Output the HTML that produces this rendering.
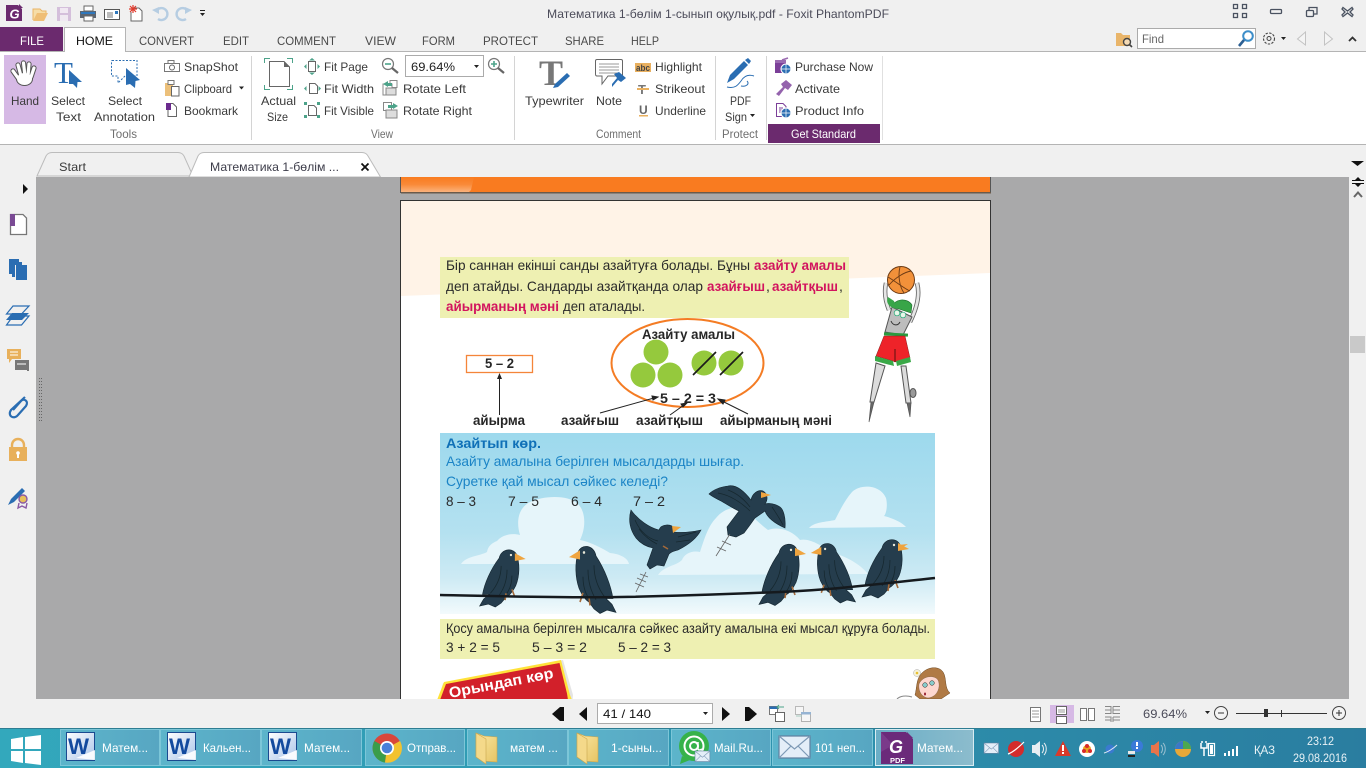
<!DOCTYPE html>
<html><head><meta charset="utf-8"><title>Foxit PhantomPDF</title>
<style>
html,body{margin:0;padding:0;width:1366px;height:768px;overflow:hidden;background:#f0f0f0}
svg{display:block}
text{font-family:"Liberation Sans","DejaVu Sans",sans-serif;font-size:12px;fill:#3a3a3a}
.g{fill:#6f6f6f}
.w{fill:#fff}
.b{font-weight:bold;font-size:14px;fill:#262626}
.p{font-size:14px;fill:#2a2a2a}
.m{font-weight:bold;font-size:14px;fill:#d2145e}
.u{font-size:14px;fill:#1b84c6}
</style></head><body>
<svg width="1366" height="768" viewBox="0 0 1366 768" xmlns="http://www.w3.org/2000/svg">
<defs>
<linearGradient id="sky" x1="0" y1="0" x2="0" y2="1"><stop offset="0" stop-color="#9dd9ed"/><stop offset=".55" stop-color="#b4e1f0"/><stop offset=".8" stop-color="#cdeaf4"/><stop offset="1" stop-color="#f2fafc"/></linearGradient>
<linearGradient id="bar" x1="0" y1="0" x2="1" y2="0"><stop offset="0" stop-color="#33a8bc"/><stop offset=".45" stop-color="#2f98b2"/><stop offset="1" stop-color="#2a7da0"/></linearGradient>
<linearGradient id="btn" x1="0" y1="0" x2="1" y2="0"><stop offset="0" stop-color="#5cb5cb"/><stop offset="1" stop-color="#57a6c2"/></linearGradient>
<linearGradient id="act" x1="0" y1="0" x2="1" y2="0"><stop offset="0" stop-color="#6aaec6"/><stop offset="1" stop-color="#8cbccd"/></linearGradient>
<linearGradient id="og" x1="0" y1="0" x2="0" y2="1"><stop offset="0" stop-color="#f97c20"/><stop offset=".5" stop-color="#f98a38"/><stop offset="1" stop-color="#fbb27c"/></linearGradient>
<linearGradient id="fold" x1="0" y1="0" x2="1" y2="1"><stop offset="0" stop-color="#fbe9a6"/><stop offset="1" stop-color="#e6c463"/></linearGradient>
<linearGradient id="wd" x1="0" y1="0" x2="1" y2="1"><stop offset="0" stop-color="#ffffff"/><stop offset="1" stop-color="#a9c4e8"/></linearGradient>
<g id="bird">
<path fill="#253d4d" stroke="#14252f" stroke-width=".6" d="M8,-3C11,6 11,18 7,28C4,34 1,38-3,40L-8,46L-14,50L-21,47L-30,49L-26,42L-20,37L-27,37C-25,26-19,12-10,0C-8,-10 5,-11 8,-3Z"/>
<path fill="none" stroke="#16282f" stroke-width=".8" d="M-8,8C-8,18-12,28-19,36M-2,12C-2,22-5,31-10,38M3,18C3,26 1,32-3,37"/>
<path fill="#efa43f" d="M6,-5L17,1L6,3Z"/><circle cx="2" cy="-3" r="1.200" fill="#e8e8d8"/>
<path fill="none" stroke="#a56a3a" stroke-width="1.600" d="M-3,36L-4,43M3,32L6,40"/>
</g>
<g id="fly">
<path fill="#253d4d" stroke="#14252f" stroke-width=".6" d="M9,-3C5,-9-5,-8-7,-2C-16,-4-28,-12-35,-22C-38,-12-36,-2-30,6C-25,12-18,15-13,16L-19,33L-16,37L-9,33L-2,34L3,22C5,20 8,19 12,18C20,14 30,8 35,-2C26,0 16,1 8,0Z"/>
<path fill="#efa43f" d="M6,-6L15,-5L7,1Z"/>
<path fill="none" stroke="#16282f" stroke-width=".7" d="M-31,-12C-26,0-17,7-8,9M-27,-3C-21,5-15,9-9,12M12,5L30,0M10,10L24,8"/>
<path fill="none" stroke="#a56a3a" stroke-width="1.500" d="M-3,14L2,17"/>
</g>
<g id="fly2">
<path fill="#253d4d" stroke="#14252f" stroke-width=".6" d="M-7,1C-14,-8-22,-15-30,-13C-38,-12-45,-9-49,-5C-45,-2-41,0-37,2C-30,6-24,10-19,12L-31,28L-30,36L-22,38L-14,34L-8,26L-3,19L7,12C9,18 16,24 27,29C28,18 25,10 22,8C16,4 10,4 7,5C10,1 10,-5 5,-8C0,-10-6,-5-7,1Z"/>
<path fill="#efa43f" d="M3,-7L13,-4L3,-1Z"/>
<path fill="none" stroke="#16282f" stroke-width=".7" d="M-40,-6C-28,-4-16,4-8,12M-30,-9C-22,-6-14,0-8,8M14,8C18,14 22,20 25,26"/>
</g>
<g id="env"><rect x="0" y="0" width="31" height="22" fill="#e4eef8" stroke="#5f7f9f" stroke-width="1.200"/><path d="M0,0L15.500,13L31,0M0,22L12,10M31,22L19,10" fill="none" stroke="#7d99b5" stroke-width="1.200"/></g>
</defs>

<rect width="1366" height="768" fill="#f0f0f0"/>

<!-- quick access -->
<path d="M6,5H18L22,9V21H6Z" fill="#6b2a6e"/><path d="M19,4L23,8H19Z" fill="#6b2a6e"/><text x="9.500" y="18.500" style="font:bold italic 13px 'Liberation Sans',sans-serif;fill:#fff">G</text>
<path d="M33,20V9H40L42,11H46V14" fill="#f6dda8" stroke="#eab566"/><path d="M33,21L37,13H48L44,21Z" fill="#efbe76"/>
<path d="M57,7H71V21H57Z" fill="#d4bfdb"/><rect x="60" y="8" width="8" height="5" fill="#f0e8f2"/><rect x="60" y="15" width="8" height="6" fill="#efe9f1"/>
<rect x="84" y="6" width="9" height="5" fill="#fff" stroke="#666"/><rect x="80" y="11" width="16" height="7" fill="#5c6672"/><rect x="81" y="12" width="14" height="2" fill="#2f78bd"/><rect x="84" y="16" width="9" height="5" fill="#fff" stroke="#666"/>
<rect x="104.500" y="9.500" width="15" height="10" fill="#fff" stroke="#555"/><path d="M107,13H113M107,15H113M107,17H113" stroke="#777"/><rect x="115" y="11" width="3" height="3" fill="#2f78bd"/>
<path d="M133,8H139L142,11V21H131V12" fill="#fff" stroke="#666"/><path d="M133,5V13M129,9H137M130,6L136,12M136,6L130,12" stroke="#e03b2e" stroke-width="1.200"/>
<path d="M157,10A6,6 0 1 1 158,19" fill="none" stroke="#b6cde2" stroke-width="2.400"/><path d="M152,10L159,7L159,14Z" fill="#b6cde2"/>
<path d="M187,10A6,6 0 1 0 186,19" fill="none" stroke="#b6cde2" stroke-width="2.400"/><path d="M192,10L185,7L185,14Z" fill="#b6cde2"/>
<rect x="200" y="10" width="5" height="1" fill="#222"/><path d="M200,13H205L202.500,16Z" fill="#222"/>

<text x="547" y="18" textLength="342" lengthAdjust="spacingAndGlyphs" style="fill:#4c4c5a">Математика 1-бөлім 1-сынып оқулық.pdf - Foxit PhantomPDF</text>

<!-- window controls -->
<g fill="none" stroke="#4a5260" stroke-width="1.300">
<path d="M1233.500,4.500h4v4h-4zM1242.500,4.500h4v4h-4zM1233.500,13.500h4v4h-4zM1242.500,13.500h4v4h-4z"/>
<rect x="1270.500" y="9.500" width="11" height="4" rx="1"/>
<rect x="1306.500" y="10.500" width="7" height="6" rx="1"/><path d="M1309,10V7.500h8V14h-3"/>
<path d="M1343,7.500L1347.500,11L1352,7.500L1353,9L1350,12L1353,15L1352,16.500L1347.500,13L1343,16.500L1342,15L1345,12L1342,9Z"/>
</g>

<!-- tabs -->
<rect x="0" y="27" width="63" height="24.500" fill="#6b2a6e"/>
<text x="20" y="45" textLength="24" lengthAdjust="spacingAndGlyphs" class="w">FILE</text>
<rect x="0" y="51" width="1366" height="1" fill="#b4b4b4"/>
<path d="M64.500,52V27.500H125.500V52" fill="#fff" stroke="#b4b4b4"/><rect x="65" y="51" width="60" height="2" fill="#fff"/>
<text x="76" y="45" textLength="37" lengthAdjust="spacingAndGlyphs" style="fill:#111">HOME</text>
<text x="139" y="45" textLength="55" lengthAdjust="spacingAndGlyphs" style="fill:#4a4a4a">CONVERT</text>
<text x="223" y="45" textLength="26" lengthAdjust="spacingAndGlyphs" style="fill:#4a4a4a">EDIT</text>
<text x="277" y="45" textLength="59" lengthAdjust="spacingAndGlyphs" style="fill:#4a4a4a">COMMENT</text>
<text x="365" y="45" textLength="31" lengthAdjust="spacingAndGlyphs" style="fill:#4a4a4a">VIEW</text>
<text x="422" y="45" textLength="33" lengthAdjust="spacingAndGlyphs" style="fill:#4a4a4a">FORM</text>
<text x="483" y="45" textLength="55" lengthAdjust="spacingAndGlyphs" style="fill:#4a4a4a">PROTECT</text>
<text x="565" y="45" textLength="39" lengthAdjust="spacingAndGlyphs" style="fill:#4a4a4a">SHARE</text>
<text x="631" y="45" textLength="28" lengthAdjust="spacingAndGlyphs" style="fill:#4a4a4a">HELP</text>

<!-- find area -->
<path d="M1116,46V33H1121L1123,35H1130V46Z" fill="#e9b56a"/><circle cx="1127" cy="42" r="3.500" fill="#fff" fill-opacity=".5" stroke="#444" stroke-width="1.400"/><path d="M1129.500,44.500L1132,47" stroke="#444" stroke-width="1.600"/>
<rect x="1137.500" y="28.500" width="118" height="20" fill="#fff" stroke="#ababab"/>
<text x="1142" y="43" textLength="22" lengthAdjust="spacingAndGlyphs" style="fill:#666">Find</text>
<circle cx="1248" cy="36" r="4.800" fill="#fff" stroke="#3d8ec9" stroke-width="2"/><path d="M1244,40L1239,46" stroke="#2c5f92" stroke-width="2.600"/>
<circle cx="1269" cy="38.500" r="2" fill="none" stroke="#444"/><circle cx="1269" cy="38.500" r="5.500" fill="none" stroke="#444" stroke-width="1.100" stroke-dasharray="2.400 1.300"/>
<path d="M1281,37H1286L1283.500,40Z" fill="#222"/>
<path d="M1305.500,32L1297.500,39L1305.500,45Z" fill="#f4f4f4" stroke="#c3c3c3"/>
<path d="M1324.500,32L1332.500,39L1324.500,45Z" fill="#f4f4f4" stroke="#c3c3c3"/>
<path d="M1349,41L1352.500,37.500L1356,41" fill="none" stroke="#333" stroke-width="1.800"/>

<!-- ribbon -->
<rect x="0" y="52" width="1366" height="92" fill="#fff"/>
<rect x="0" y="144" width="1366" height="1" fill="#b4b4b4"/>
<rect x="882" y="56" width="1" height="84" fill="#e0e0e0"/>
<rect x="251" y="56" width="1" height="84" fill="#d4d4d4"/><rect x="514" y="56" width="1" height="84" fill="#d4d4d4"/><rect x="715" y="56" width="1" height="84" fill="#d4d4d4"/><rect x="766" y="56" width="1" height="84" fill="#d4d4d4"/>

<rect x="4" y="55" width="42" height="69" fill="#d6b9e5"/>
<g stroke-linecap="round" fill="none">
<g stroke="#555" stroke-width="5.200"><path d="M13,71L18,78"/><path d="M18,65L21,76"/><path d="M23.500,63L25,76"/><path d="M29,64L28,76"/><path d="M34,68L31,77"/></g>
<ellipse cx="24.500" cy="79" rx="8.500" ry="7" fill="#555" stroke="none"/>
<g stroke="#fff" stroke-width="3.200"><path d="M13,71L18,78"/><path d="M18,65L21,76"/><path d="M23.500,63L25,76"/><path d="M29,64L28,76"/><path d="M34,68L31,77"/></g>
<ellipse cx="24.500" cy="79" rx="7.500" ry="6" fill="#fff" stroke="none"/>
</g>
<text x="11" y="105" textLength="28" lengthAdjust="spacingAndGlyphs">Hand</text>

<text x="54" y="83" style="font-family:'Liberation Serif',serif;font-size:31px;fill:#2a6db2">T</text>
<path d="M69,70L82,82L77.500,82L77,88L73,84L69,84Z" fill="#2a6db2"/>
<text x="51" y="105" textLength="34" lengthAdjust="spacingAndGlyphs">Select</text><text x="56" y="121" textLength="25" lengthAdjust="spacingAndGlyphs">Text</text>

<path d="M112,60.500H137V76H125L118,83V76H111.500V61Z" fill="#fff" stroke="#2a6db2" stroke-dasharray="2 1.500"/>
<path d="M126,68L140,80L135.500,81L135,88L130,84L126,85Z" fill="#2a6db2"/>
<text x="108" y="105" textLength="34" lengthAdjust="spacingAndGlyphs">Select</text><text x="94" y="121" textLength="61" lengthAdjust="spacingAndGlyphs">Annotation</text>

<rect x="164.500" y="63.500" width="15" height="8" fill="#fff" stroke="#777"/><rect x="168" y="60.500" width="6" height="3" fill="#fff" stroke="#777"/><circle cx="172" cy="67.500" r="2.500" fill="#fff" stroke="#666"/>
<text x="184" y="71" textLength="54" lengthAdjust="spacingAndGlyphs">SnapShot</text>
<rect x="165" y="83" width="8" height="13" fill="#ecc07a"/><rect x="168" y="80.500" width="6" height="4" fill="#fff" stroke="#777"/><path d="M171.500,86.500H179V96H171.500Z" fill="#fff" stroke="#666"/>
<text x="184" y="93" textLength="48" lengthAdjust="spacingAndGlyphs">Clipboard</text><path d="M239,86.500H244L241.500,89.500Z" fill="#222"/>
<path d="M168,103.500H173L176.500,107V116.500H168Z" fill="#fff" stroke="#666"/><rect x="166" y="103" width="5" height="7" fill="#6b2a8e"/>
<text x="184" y="115" textLength="54" lengthAdjust="spacingAndGlyphs">Bookmark</text>
<text x="110" y="138" textLength="27" lengthAdjust="spacingAndGlyphs" class="g">Tools</text>

<!-- view -->
<path d="M269.500,61.500H284L289.500,67V86.500H269.500Z" fill="#fff" stroke="#666"/><path d="M284,61V67H290Z" fill="#666"/>
<path d="M264.500,63V58.500H270M287,58.500H292.500V63M264.500,85V89.500H270M287,89.500H292.500V85" fill="none" stroke="#4da38a"/>
<text x="261" y="105" textLength="35" lengthAdjust="spacingAndGlyphs">Actual</text><text x="267" y="121" textLength="21" lengthAdjust="spacingAndGlyphs">Size</text>

<rect x="308.500" y="61.500" width="7" height="10" fill="#fff" stroke="#666"/><path d="M312,58L309,60.500H315ZM312,75L309,72.500H315ZM304,66.500L306.500,64V69ZM320,66.500L317.500,64V69Z" fill="#4da38a"/>
<path d="M309.500,83.500H315L317.500,86V93.500H309.500Z" fill="#fff" stroke="#666"/><path d="M304,88.500L306.500,86V91ZM321,88.500L318.500,86V91Z" fill="#4da38a"/>
<path d="M308.500,105.500H314L316.500,108V115.500H308.500Z" fill="#fff" stroke="#666"/><path d="M304,102H307V105H304ZM317,102H320V105H317ZM304,115H307V118H304ZM317,115H320V118H317Z" fill="#4da38a"/>
<text x="324" y="71" textLength="44" lengthAdjust="spacingAndGlyphs">Fit Page</text>
<text x="324" y="93" textLength="50" lengthAdjust="spacingAndGlyphs">Fit Width</text>
<text x="324" y="115" textLength="50" lengthAdjust="spacingAndGlyphs">Fit Visible</text>

<circle cx="388" cy="64" r="5.500" fill="#fff" stroke="#777" stroke-width="1.200"/><path d="M385,64H391" stroke="#4da38a" stroke-width="1.600"/><path d="M392,68L398,73" stroke="#666" stroke-width="2.200"/>
<rect x="405.500" y="55.500" width="78" height="21" fill="#fff" stroke="#ababab"/>
<text x="411" y="71" textLength="44" lengthAdjust="spacingAndGlyphs" style="fill:#222">69.64%</text><path d="M474,65H479L476.500,68Z" fill="#222"/>
<circle cx="494" cy="64" r="5.500" fill="#fff" stroke="#777" stroke-width="1.200"/><path d="M491,64H497M494,61V67" stroke="#4da38a" stroke-width="1.600"/><path d="M498,68L504,73" stroke="#666" stroke-width="2.200"/>

<rect x="390" y="80.500" width="7" height="7" fill="#fff" stroke="#888"/><path d="M383,84H392V95H383Z" fill="#fff" stroke="#888"/><path d="M386,88H396V95H386Z" fill="#ddd" stroke="#888"/><path d="M383,84L388,81V87Z" fill="#4da38a"/><rect x="387" y="83" width="5" height="3" fill="#4da38a"/>
<text x="403" y="93" textLength="63" lengthAdjust="spacingAndGlyphs">Rotate Left</text>
<rect x="383.500" y="102.500" width="8" height="8" fill="#fff" stroke="#888"/><path d="M386,110H397V118H386Z" fill="#ddd" stroke="#888"/><path d="M398,106L393,103V109Z" fill="#4da38a"/><rect x="388" y="105" width="6" height="3" fill="#4da38a"/>
<text x="403" y="115" textLength="69" lengthAdjust="spacingAndGlyphs">Rotate Right</text>
<text x="371" y="138" textLength="22" lengthAdjust="spacingAndGlyphs" class="g">View</text>

<!-- comment -->
<text x="539" y="85" style="font-family:'Liberation Serif',serif;font-size:36px;font-weight:bold;fill:#777">T</text>
<path d="M553,88L555,84L567,73L570,76L558,87Z" fill="#2a6db2"/>
<text x="525" y="105" textLength="59" lengthAdjust="spacingAndGlyphs">Typewriter</text>
<path d="M597,59.500H621Q622.500,59.500 622.500,61V76H608L602,84V76H597Q595.500,76 595.500,74V61Q595.500,59.500 597,59.500Z" fill="#fff" stroke="#666"/>
<path d="M599,64H619M599,67H619M599,70H619M599,73H619" stroke="#999"/>
<path d="M612,84L617,78L614,74L619,72L626,78L621,82L618,80L612,87Z" fill="#2a6db2"/>
<text x="596" y="105" textLength="26" lengthAdjust="spacingAndGlyphs">Note</text>
<rect x="635" y="63" width="16" height="9" fill="#e9b05f"/><text x="636" y="71" textLength="14" lengthAdjust="spacingAndGlyphs" style="font-size:9px;font-weight:bold;fill:#444">abc</text>
<text x="655" y="71" textLength="47" lengthAdjust="spacingAndGlyphs">Highlight</text>
<text x="638" y="94" style="font-weight:bold;font-size:13px;fill:#777">T</text><rect x="637" y="88" width="12" height="2" fill="#e9b05f"/>
<text x="655" y="93" textLength="50" lengthAdjust="spacingAndGlyphs">Strikeout</text>
<text x="639" y="114" style="font-weight:bold;font-size:12px;fill:#666">U</text><rect x="639" y="115" width="9" height="1.500" fill="#e9b05f"/>
<text x="655" y="115" textLength="51" lengthAdjust="spacingAndGlyphs">Underline</text>
<text x="596" y="138" textLength="45" lengthAdjust="spacingAndGlyphs" class="g">Comment</text>

<!-- protect -->
<path d="M727,83L730,75L744,61L748,65L734,79Z" fill="#2a6db2"/><path d="M745,60L748,58L751,61L749,64Z" fill="#2a6db2"/>
<path d="M727,87C735,89 738,85 741,81C744,76 748,74 754,76" fill="none" stroke="#2a6db2"/><path d="M741,86C746,87 750,84 747,81" fill="none" stroke="#2a6db2"/>
<text x="730" y="105" textLength="21" lengthAdjust="spacingAndGlyphs">PDF</text><text x="725" y="121" textLength="22" lengthAdjust="spacingAndGlyphs">Sign</text><path d="M750,114H755L752.500,117Z" fill="#222"/>
<text x="722" y="138" textLength="36" lengthAdjust="spacingAndGlyphs" class="g">Protect</text>

<!-- standard -->
<rect x="775" y="63" width="11" height="10" fill="#7b3f98"/><path d="M775,60H786V63H775Z" fill="#9a6ab0"/><path d="M782,60L788,58" stroke="#9a6ab0" stroke-width="1.500"/>
<circle cx="786" cy="69" r="5" fill="#2a6db2" stroke="#fff"/><path d="M781,69H791M786,64V74" stroke="#fff" stroke-width=".7"/>
<text x="795" y="71" textLength="78" lengthAdjust="spacingAndGlyphs">Purchase Now</text>
<path d="M776,94L783,87L781,84L786,80L792,85L788,90L785,88L779,96Z" fill="#9463ad"/>
<text x="795" y="93" textLength="45" lengthAdjust="spacingAndGlyphs">Activate</text>
<path d="M776.500,103.500H783L786,106.500V116.500H776.500Z" fill="#fff" stroke="#7b3f98"/><path d="M779,108H783M779,110H783M779,112H782" stroke="#7b3f98"/>
<circle cx="786" cy="113" r="5" fill="#2a6db2" stroke="#fff"/><path d="M781,113H791M786,108V118" stroke="#fff" stroke-width=".7"/>
<text x="795" y="115" textLength="69" lengthAdjust="spacingAndGlyphs">Product Info</text>
<rect x="768" y="124" width="112" height="19" fill="#6b2a6e"/>
<text x="791" y="138" textLength="65" lengthAdjust="spacingAndGlyphs" class="w">Get Standard</text>

<!-- doc tabs -->
<path d="M37,176L46,156Q48,152.500 52,152.500H178Q182,152.500 184,156L193,176Z" fill="#f0f0f0" stroke="#bcbcbc"/>
<path d="M189,177L198,156Q200,152.500 204,152.500H362Q366,152.500 368,156L380.500,177Z" fill="#fff" stroke="#bcbcbc"/>
<text x="59" y="171" textLength="27" lengthAdjust="spacingAndGlyphs">Start</text>
<text x="210" y="171" textLength="129" lengthAdjust="spacingAndGlyphs" style="fill:#3d3d4a">Математика 1-бөлім ...</text>
<path d="M361.500,163.500L368.500,170.500M368.500,163.500L361.500,170.500" stroke="#111" stroke-width="1.800"/>
<path d="M1351,161H1364L1357.500,166Z" fill="#111"/>

<!-- doc area -->
<rect x="36" y="177" width="1313" height="522" fill="#a9a9aa"/>
<rect x="1349" y="177" width="17" height="522" fill="#f0f0f0"/>
<path d="M1352,180.500H1364M1352,183.500H1364" stroke="#111"/><path d="M1358,177L1355,180H1361ZM1358,187L1355,184H1361Z" fill="#111"/>
<path d="M1354,197L1358,192.500L1362,197" fill="none" stroke="#666" stroke-width="2"/>
<rect x="1350" y="336" width="15" height="17" fill="#c9c9c9"/>

<!-- left panel icons -->
<path d="M23,184L28,189L23,194Z" fill="#111"/>
<path d="M10.500,214.500H23L26.500,218V234.500H10.500Z" fill="#fff" stroke="#777" stroke-width="1.300"/><rect x="10" y="214" width="5" height="12" fill="#7a4a94"/>
<path d="M9,259H19V262H12V274H9Z" fill="#2a6db2"/><path d="M12,262H22V265H15V277H12Z" fill="#2a6db2"/><rect x="16" y="265" width="11" height="15" fill="#2a6db2"/>
<g fill="none" stroke="#2a6db2" stroke-width="1.200"><path d="M13,306H29L21.500,314H6.500Z"/><path d="M13,316H29L21.500,325H6.500Z"/></g><path d="M12,313H29L22,320H6Z" fill="#2a6db2"/>
<path d="M7,349H21V359H12L9,363V359H7Z" fill="#e8b05b"/><path d="M10,352H18M10,355H18" stroke="#fff"/>
<path d="M15,360H29V371L27,371V370H15Z" fill="#777"/><path d="M17,364H26" stroke="#fff"/>
<path d="M25,397L11,410C7,416 14,420 18,415L26,406C29,401 24,398 21,401L13,410" fill="none" stroke="#2a6db2" stroke-width="2.200"/>
<path d="M12,448V445A6,6 0 0 1 24,445V448" fill="none" stroke="#e8b05b" stroke-width="2.400"/><rect x="9" y="447" width="18" height="14" fill="#e8b05b"/><circle cx="18" cy="453" r="1.800" fill="#fff"/><rect x="17" y="453" width="2" height="5" fill="#fff"/>
<path d="M8,505L11,499L22,488L25,491L14,502Z" fill="#2a6db2"/><circle cx="23" cy="499" r="4" fill="#e8c05b" stroke="#8a5aa5" stroke-width="1.400"/><path d="M19,503L18,508L22,506L26,508L27,503" fill="none" stroke="#8a5aa5" stroke-width="1.400"/>
<path d="M39.500,378V421M41.500,378V421" stroke="#666" stroke-dasharray="1 2" fill="none"/>

<!-- previous page strip -->
<rect x="401" y="177" width="589" height="15" fill="#f97b20"/>
<path d="M401,177H474L471,190L469,192H401Z" fill="url(#og)"/>
<path d="M400.500,177V192.500H990.500V177" fill="none" stroke="#555"/>
<rect x="401" y="192" width="590" height="1.500" fill="#6b5a4a"/>

<!-- page -->
<rect x="400.500" y="200.500" width="590" height="500" fill="#fff" stroke="#333"/>
<path d="M401,201H990V273L401,296Z" fill="#fff3e7"/>

<rect x="440" y="257" width="409" height="61" fill="#eef0b2"/>
<text x="446" y="270" textLength="304" lengthAdjust="spacingAndGlyphs" class="p">Бір саннан екінші санды азайтуға болады. Бұны</text>
<text x="754" y="270" textLength="92" lengthAdjust="spacingAndGlyphs" class="m">азайту амалы</text>
<text x="446" y="291" textLength="257" lengthAdjust="spacingAndGlyphs" class="p">деп атайды. Сандарды азайтқанда олар</text>
<text x="707" y="291" textLength="58" lengthAdjust="spacingAndGlyphs" class="m">азайғыш</text><text x="766" y="291" class="p">,</text>
<text x="772" y="291" textLength="66" lengthAdjust="spacingAndGlyphs" class="m">азайтқыш</text><text x="839" y="291" class="p">,</text>
<text x="446" y="311" textLength="113" lengthAdjust="spacingAndGlyphs" class="m">айырманың мәні</text>
<text x="563" y="311" textLength="82" lengthAdjust="spacingAndGlyphs" class="p">деп аталады.</text>

<!-- diagram -->
<rect x="466.500" y="355.500" width="66" height="17" fill="#fff" stroke="#f4853a" stroke-width="1.300"/>
<text x="485" y="368" textLength="29" lengthAdjust="spacingAndGlyphs" class="b">5 – 2</text>
<path d="M499.500,415V377" stroke="#222"/><path d="M499.500,373L497,379H502Z" fill="#222"/>
<ellipse cx="687.500" cy="363" rx="76" ry="44" fill="none" stroke="#f47c24" stroke-width="2"/>
<text x="642" y="339" textLength="93" lengthAdjust="spacingAndGlyphs" class="b">Азайту амалы</text>
<g fill="#95c93d"><circle cx="656" cy="352" r="12.500"/><circle cx="643" cy="375" r="12.500"/><circle cx="670" cy="375" r="12.500"/><circle cx="704" cy="363" r="12.500"/><circle cx="731" cy="363" r="12.500"/></g>
<path d="M693,375L716,352M720,375L743,352" stroke="#1c1c1c" stroke-width="1.700"/>
<text x="660" y="403" textLength="56" lengthAdjust="spacingAndGlyphs" class="b">5 – 2 = 3</text>
<g stroke="#222" fill="#222"><path d="M600,413L654,398"/><path d="M658,397L652,396L653,400Z"/><path d="M670,415L684,405"/><path d="M687,403L681,404L683,407Z"/><path d="M748,414L722,401"/><path d="M718,399L723,404L725,400Z"/></g>
<text x="473" y="425" textLength="52" lengthAdjust="spacingAndGlyphs" class="b">айырма</text>
<text x="561" y="425" textLength="58" lengthAdjust="spacingAndGlyphs" class="b">азайғыш</text>
<text x="636" y="425" textLength="67" lengthAdjust="spacingAndGlyphs" class="b">азайтқыш</text>
<text x="720" y="425" textLength="112" lengthAdjust="spacingAndGlyphs" class="b">айырманың мәні</text>

<!-- compass character -->
<g>
<path d="M886,283C884,292 885,300 889,310M917,283C920,294 917,308 910,322" fill="none" stroke="#666" stroke-width="4.500"/>
<path d="M886,283C884,292 885,300 889,310M917,283C920,294 917,308 910,322" fill="none" stroke="#e6e6e6" stroke-width="2.800"/>
<circle cx="901" cy="280" r="13.500" fill="#f2913a" stroke="#6b3a14"/>
<path d="M889,285C896,277 905,272 911,271M888,277C895,281 905,289 910,291M900,267C898,274 899,286 904,293" fill="none" stroke="#6b3a14" stroke-width=".9"/>
<path d="M892,307L912,317L903,335L885,332Z" fill="#bdbdbd" stroke="#555"/>
<path d="M892,307C894,299 907,297 912,305L911,313L899,309Z" fill="#38a548" stroke="#1d6b2d" stroke-width=".6"/><path d="M888,297C885,303 890,308 897,309L894,301Z" fill="#38a548"/>
<circle cx="897" cy="313" r="2.800" fill="#e9f6e9" stroke="#2a7" stroke-width=".7"/><circle cx="903" cy="315" r="2.800" fill="#e9f6e9" stroke="#2a7" stroke-width=".7"/>
<path d="M891,321C893,326 898,326 900,322" fill="none" stroke="#333"/>
<rect x="884" y="333" width="24" height="3" fill="#2a9a3e" transform="rotate(3 896 334)"/>
<path d="M884,336H905L910,358L895,362L893,361L876,356Z" fill="#ee2329" stroke="#8a1a1a" stroke-width=".5"/>
<path d="M875,356L893,361L894,366L875,361ZM896,361L910,357L911,362L897,366Z" fill="#3aa948"/>
<path d="M895,349V362" stroke="#5a1010"/>
<path d="M876,363L885,366L874,402H870Z" fill="#dcdcdc" stroke="#555"/><path d="M871,402L869,422L874,402" fill="#666" stroke="#555" stroke-width=".7"/>
<path d="M901,366H906L911,403H906Z" fill="#dcdcdc" stroke="#555"/><path d="M907,403L910,417L911,403" fill="#666" stroke="#555" stroke-width=".7"/>
<ellipse cx="913" cy="393" rx="3" ry="4.500" fill="#999" stroke="#555"/>
</g>

<!-- sky panel -->
<rect x="440" y="433" width="495" height="181" fill="url(#sky)"/>
<g fill="#e6f5fa">
<path d="M461,564C466,556 480,556 487,552C488,546 492,543 497,541C503,534 513,533 520,535C516,522 518,508 530,502C542,496 568,494 578,504C586,512 586,528 580,540C590,542 602,548 610,553C620,554 628,558 629,564Z"/>
<path d="M658,575C664,566 676,566 682,560C684,554 692,550 700,552C704,540 708,526 716,518C724,508 738,504 748,512C754,518 760,524 768,530C778,526 792,530 800,540C808,538 820,544 830,552C846,556 860,564 868,574Z"/>
<path d="M809,528C814,522 826,522 835,520C840,510 845,500 852,492C860,484 880,484 886,498C888,506 886,514 884,516C892,518 902,522 906,527Z"/>
</g>
<text x="446" y="448" textLength="95" lengthAdjust="spacingAndGlyphs" style="font-weight:bold;font-size:14px;fill:#0f70b7">Азайтып көр.</text>
<text x="446" y="466" textLength="298" lengthAdjust="spacingAndGlyphs" class="u">Азайту амалына берілген мысалдарды шығар.</text>
<text x="446" y="486" textLength="222" lengthAdjust="spacingAndGlyphs" class="u">Суретке қай мысал сәйкес келеді?</text>
<text x="446" y="506" textLength="30" lengthAdjust="spacingAndGlyphs" class="p">8 – 3</text>
<text x="508" y="506" textLength="31" lengthAdjust="spacingAndGlyphs" class="p">7 – 5</text>
<text x="571" y="506" textLength="31" lengthAdjust="spacingAndGlyphs" class="p">6 – 4</text>
<text x="633" y="506" textLength="32" lengthAdjust="spacingAndGlyphs" class="p">7 – 2</text>

<use href="#bird" transform="translate(509 558) scale(.98)"/>
<use href="#bird" transform="translate(586 556) scale(-1 1.150)"/>
<use href="#bird" transform="translate(789 553) scale(1 1.050)"/>
<use href="#bird" transform="translate(827 552) scale(-.95 1.020)"/>
<use href="#bird" transform="translate(892 548) scale(1 1)"/>
<path d="M898,545L908,544L900,549Z" fill="#efa43f"/>
<path d="M440,595C500,596 560,598 620,597C680,596 730,594 780,592C830,590 880,584 935,578" fill="none" stroke="#151a1e" stroke-width="2.500"/>
<use href="#fly" transform="translate(666 532)"/>
<use href="#fly2" transform="translate(758 499)"/>
<path d="M636,592L646,572M635,583L644,587M637,578L646,582M640,574L648,577M716,556L730,534M717,547L726,551M722,541L731,545" fill="none" stroke="#666" stroke-width=".8"/>

<rect x="440" y="619" width="495" height="40" fill="#eef0b2"/>
<text x="446" y="633" textLength="484" lengthAdjust="spacingAndGlyphs" class="p">Қосу амалына берілген мысалға сәйкес азайту амалына екі мысал құруға болады.</text>
<text x="446" y="652" textLength="54" lengthAdjust="spacingAndGlyphs" class="p">3 + 2 = 5</text>
<text x="532" y="652" textLength="55" lengthAdjust="spacingAndGlyphs" class="p">5 – 3 = 2</text>
<text x="618" y="652" textLength="53" lengthAdjust="spacingAndGlyphs" class="p">5 – 2 = 3</text>

<!-- red ribbon -->
<path d="M443,683L563,660L573,695L572,705L437,705Z" fill="#d9d9d9" opacity=".7"/>
<path d="M444,682L561,660L570,695L572,700H437Z" fill="#ffe23a"/>
<path d="M446,684L559.500,663L567,693.500L568,700H440Z" fill="#d2202a"/>
<text x="0" y="0" transform="translate(450 698) rotate(-11)" textLength="106" lengthAdjust="spacingAndGlyphs" style="font-weight:bold;font-size:15px;fill:#fff">Орындап көр</text>

<!-- girl -->
<path d="M915,695C917,688 916,680 921,674C928,666 939,666 943,672C947,678 944,688 950,693L941,699H920Z" fill="#b07a45" stroke="#6a4722" stroke-width=".5"/>
<path d="M919,684C923,675 935,675 938,680C941,686 938,697 928,698C921,697 918,690 919,684Z" fill="#fdd7cf" stroke="#7a5a40" stroke-width=".4"/>
<circle cx="917" cy="673" r="3.500" fill="#f6f2d8" stroke="#aaa" stroke-width=".5"/><circle cx="917" cy="673" r="1.300" fill="#e8c030"/>
<circle cx="925" cy="685" r="2.300" fill="#8cc" stroke="#222" stroke-width=".5"/><circle cx="932" cy="683" r="2.300" fill="#8cc" stroke="#222" stroke-width=".5"/>
<ellipse cx="925" cy="694" rx="1" ry="1.500" fill="#923"/>
<path d="M897,699C900,696 906,695 912,697" fill="none" stroke="#888"/>

<!-- cover under nav -->
<rect x="0" y="699" width="1366" height="29" fill="#f0f0f0"/>

<!-- nav bar -->
<path d="M564,707L556,714L564,721Z" fill="#111"/><rect x="560" y="707" width="4" height="14" fill="#111"/><path d="M560,707L552,714L560,721Z" fill="#111"/>
<path d="M587,707L579,714L587,721Z" fill="#111"/>
<rect x="597.500" y="703.500" width="115" height="20" fill="#fff" stroke="#ababab"/>
<text x="603" y="718" textLength="48" lengthAdjust="spacingAndGlyphs" style="fill:#111">41 / 140</text>
<path d="M703,712H708L705.500,715Z" fill="#222"/>
<path d="M722,707L730,714L722,721Z" fill="#111"/>
<rect x="745" y="707" width="4" height="14" fill="#111"/><path d="M749,707L757,714L749,721Z" fill="#111"/>
<rect x="769.500" y="706.500" width="8" height="8" fill="#fff" stroke="#777"/><rect x="769.500" y="706.500" width="8" height="2.500" fill="#2a6db2"/><rect x="775.500" y="712.500" width="9" height="9" fill="#fff" stroke="#666"/><path d="M778,707H784M779,705L777,707L779,709" stroke="#4da38a" fill="none"/>
<g opacity=".45"><rect x="795.500" y="706.500" width="8" height="8" fill="#fff" stroke="#777"/><rect x="801.500" y="712.500" width="9" height="9" fill="#fff" stroke="#666"/><rect x="801" y="712" width="10" height="2.500" fill="#2a6db2"/><path d="M796,716H802" stroke="#4da38a"/></g>
<rect x="1030.500" y="707.500" width="10" height="14" fill="#fff" stroke="#777"/><path d="M1032,711H1039M1032,714H1039M1032,717H1039" stroke="#999"/>
<rect x="1050" y="705" width="24" height="18" fill="#d6b9e5"/>
<rect x="1056.500" y="706.500" width="10" height="8" fill="#fff" stroke="#666"/><rect x="1056.500" y="716.500" width="10" height="7" fill="#fff" stroke="#666"/><path d="M1058,710H1065M1058,712H1065" stroke="#999"/>
<rect x="1080.500" y="708.500" width="6" height="12" fill="#fff" stroke="#777"/><rect x="1088.500" y="708.500" width="6" height="12" fill="#fff" stroke="#777"/>
<path d="M1105,706.500H1111V714M1113,706.500H1120M1105,710H1111M1113,710H1120M1105,717H1111V722M1113,717V722M1113,717H1120M1105,720H1111M1113,720H1120M1113,706.500V714M1105,713.500H1111M1113,713.500H1120" fill="none" stroke="#888"/>
<text x="1143" y="718" textLength="44" lengthAdjust="spacingAndGlyphs" style="fill:#4c4c5a">69.64%</text>
<path d="M1205,711H1210L1207.500,714Z" fill="#222"/>
<circle cx="1221" cy="713" r="6.500" fill="#f4f4f4" stroke="#444"/><path d="M1218,713H1224" stroke="#333"/>
<rect x="1236" y="713" width="91" height="1" fill="#333"/><rect x="1264" y="709" width="4" height="8" fill="#333"/><rect x="1281" y="710" width="1" height="7" fill="#333"/>
<circle cx="1339" cy="713" r="6.500" fill="#f4f4f4" stroke="#444"/><path d="M1336,713H1342M1339,710V716" stroke="#333"/>

<!-- taskbar -->
<rect x="0" y="728" width="1366" height="40" fill="url(#bar)"/>
<rect x="0" y="728" width="1366" height="1" fill="#2e7d92"/>
<path d="M11,739L23,737V749H11ZM25,737L41,735V749H25ZM11,751H23V763L11,761ZM25,751H41V765L25,763Z" fill="#fff"/>
<g stroke="#7cc6d8">
<rect x="60.500" y="729.500" width="99" height="36" fill="url(#btn)"/>
<rect x="160.500" y="729.500" width="100" height="36" fill="url(#btn)"/>
<rect x="261.500" y="729.500" width="100" height="36" fill="url(#btn)"/>
<rect x="365.500" y="729.500" width="99" height="36" fill="url(#btn)"/>
<rect x="467.500" y="729.500" width="100" height="36" fill="url(#btn)"/>
<rect x="568.500" y="729.500" width="100" height="36" fill="url(#btn)"/>
<rect x="671.500" y="729.500" width="99" height="36" fill="url(#btn)"/>
<rect x="772.500" y="729.500" width="100" height="36" fill="url(#btn)"/>
</g>
<rect x="875.500" y="729.500" width="98" height="36" fill="url(#act)" stroke="#d8ecf2"/>

<rect x="66.500" y="732.500" width="28" height="28" fill="url(#wd)" stroke="#1a4a90"/><text x="68" y="754" textLength="21" lengthAdjust="spacingAndGlyphs" style="font-weight:bold;font-size:22px;fill:#134a9e">W</text><path d="M76,758L95,750V760Z" fill="#fff" opacity=".9"/>
<rect x="167.500" y="732.500" width="28" height="28" fill="url(#wd)" stroke="#1a4a90"/><text x="169" y="754" textLength="21" lengthAdjust="spacingAndGlyphs" style="font-weight:bold;font-size:22px;fill:#134a9e">W</text><path d="M177,758L196,750V760Z" fill="#fff" opacity=".9"/>
<rect x="268.500" y="732.500" width="28" height="28" fill="url(#wd)" stroke="#1a4a90"/><text x="270" y="754" textLength="21" lengthAdjust="spacingAndGlyphs" style="font-weight:bold;font-size:22px;fill:#134a9e">W</text><path d="M278,758L297,750V760Z" fill="#fff" opacity=".9"/>
<text x="102" y="752" textLength="46" lengthAdjust="spacingAndGlyphs" class="w">Матем...</text>
<text x="203" y="752" textLength="48" lengthAdjust="spacingAndGlyphs" class="w">Кальен...</text>
<text x="304" y="752" textLength="46" lengthAdjust="spacingAndGlyphs" class="w">Матем...</text>
<circle cx="387" cy="748" r="14.500" fill="#d9473b"/>
<path d="M387,748L374.500,741A14.500,14.500 0 0 0 385,762.500Z" fill="#3a9d4a"/>
<path d="M387,748L400,741A14.500,14.500 0 0 1 385,762.500Z" fill="#f2c230"/>
<circle cx="387" cy="748" r="7" fill="#fff"/><circle cx="387" cy="748" r="5.300" fill="#4a80d8"/>
<text x="407" y="752" textLength="49" lengthAdjust="spacingAndGlyphs" class="w">Отправ...</text>
<path d="M476,733L484,736L497,737V762L482,761L476,757Z" fill="url(#fold)" stroke="#c9a64e" stroke-width=".6"/><path d="M476,733V757L486,764V739Z" fill="#f4d98a" stroke="#c9a64e" stroke-width=".6"/>
<path d="M577,733L585,736L598,737V762L583,761L577,757Z" fill="url(#fold)" stroke="#c9a64e" stroke-width=".6"/><path d="M577,733V757L587,764V739Z" fill="#f4d98a" stroke="#c9a64e" stroke-width=".6"/>
<text x="510" y="752" textLength="48" lengthAdjust="spacingAndGlyphs" class="w">матем ...</text>
<text x="611" y="752" textLength="51" lengthAdjust="spacingAndGlyphs" class="w">1-сыны...</text>
<circle cx="694" cy="746" r="15" fill="#36b24a"/><path d="M682,756L680,764L690,760Z" fill="#36b24a"/>
<circle cx="694" cy="746" r="9.500" fill="none" stroke="#fff" stroke-width="2"/><circle cx="694" cy="746" r="4" fill="none" stroke="#fff" stroke-width="2"/><path d="M698,742V749Q699,751 702,749" fill="none" stroke="#fff" stroke-width="1.500"/>
<use href="#env" transform="translate(695 751) scale(.48)"/>
<text x="714" y="752" textLength="49" lengthAdjust="spacingAndGlyphs" class="w">Mail.Ru...</text>
<use href="#env" transform="translate(779 736)"/>
<text x="815" y="752" textLength="50" lengthAdjust="spacingAndGlyphs" class="w">101 неп...</text>
<path d="M881,732H906L913,739V764H881Z" fill="#6b2a7a"/><path d="M907,732L913,738H907Z" fill="#6b2a7a"/><path d="M881,732L893,745L881,752Z" fill="#7a3a8a"/>
<text x="889" y="753" style="font-weight:bold;font-style:italic;font-size:18px;fill:#fff">G</text>
<text x="890" y="763" textLength="15" lengthAdjust="spacingAndGlyphs" style="font-weight:bold;font-size:7px;fill:#fff">PDF</text>
<text x="917" y="752" textLength="46" lengthAdjust="spacingAndGlyphs" class="w">Матем...</text>

<!-- tray -->
<use href="#env" transform="translate(984 743) scale(.47)"/>
<circle cx="1016" cy="749" r="8" fill="#d42c2c"/><path d="M1008,754C1014,752 1020,746 1024,742" stroke="#fff" stroke-width="1.200" fill="none"/>
<path d="M1032,745H1035L1040,741V757L1035,753H1032Z" fill="#e8eef2"/><path d="M1042,745C1044,747 1044,751 1042,753M1044,743C1047,746 1047,752 1044,755" fill="none" stroke="#e8eef2"/>
<path d="M1063,741L1071,756H1055Z" fill="#d93a2b"/><rect x="1062" y="745" width="2" height="6" fill="#fff"/><rect x="1062" y="752" width="2" height="2" fill="#fff"/>
<circle cx="1087" cy="749" r="8" fill="#fff"/><circle cx="1087" cy="749" r="4" fill="#e8a020"/><circle cx="1087" cy="746" r="2" fill="#d82a2a"/><circle cx="1084" cy="751" r="2" fill="#d82a2a"/><circle cx="1090" cy="751" r="2" fill="#d82a2a"/>
<circle cx="1110" cy="749" r="4.500" fill="#3a7ad0"/><path d="M1104,753C1108,752 1114,748 1117,745" stroke="#dfe8f5" fill="none"/>
<circle cx="1137" cy="746" r="6" fill="#3a7ad8"/><rect x="1136" y="742" width="2" height="4" fill="#fff"/><rect x="1136" y="747" width="2" height="2" fill="#fff"/><rect x="1128" y="751" width="7" height="3" fill="#e8e8e8"/><rect x="1128" y="755" width="7" height="2" fill="#222"/>
<path d="M1151,745H1154L1159,741V757L1154,753H1151Z" fill="#e8744a"/><path d="M1161,745C1163,747 1163,751 1161,753M1163,743C1166,746 1166,752 1163,755" fill="none" stroke="#9abfd0"/>
<circle cx="1183" cy="749" r="8" fill="#e8a838"/><path d="M1183,741A8,8 0 0 1 1191,749L1183,749Z" fill="#4ca850"/><path d="M1175,749A8,8 0 0 1 1183,741L1183,749Z" fill="#3a78c8"/>
<path d="M1201,743V748H1207V743M1202,743V741M1206,743V741M1204,748V756" fill="none" stroke="#fff" stroke-width="1.500"/><rect x="1208.500" y="743.500" width="6" height="12" fill="none" stroke="#fff" stroke-width="1.200"/><rect x="1210" y="745" width="3" height="9" fill="#fff"/>
<path d="M1224,753h2v3h-2zM1228,751h2v5h-2zM1232,749h2v7h-2zM1236,746h2v10h-2z" fill="#fff"/>
<text x="1254" y="754" textLength="21" lengthAdjust="spacingAndGlyphs" style="fill:#e8f2f6">ҚАЗ</text>
<text x="1307" y="745" textLength="27" lengthAdjust="spacingAndGlyphs" style="fill:#e8f2f6">23:12</text>
<text x="1293" y="762" textLength="54" lengthAdjust="spacingAndGlyphs" style="fill:#e8f2f6">29.08.2016</text>
</svg>
</body></html>
